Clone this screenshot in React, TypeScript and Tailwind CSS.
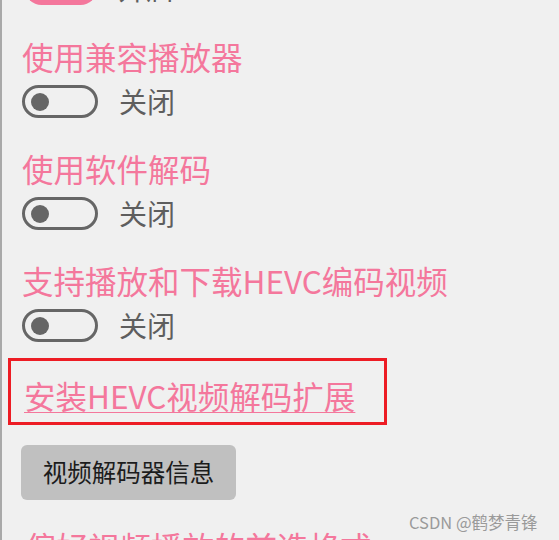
import React from "react";

const PINK = "text-[#f4779c]";

function Toggle({ on }: { on?: boolean }) {
  if (on) {
    return (
      <div className="w-[72px] h-[33px] rounded-full bg-[#f4779c] flex items-center justify-end pr-[9px] shrink-0">
        <div className="w-[18px] h-[18px] rounded-full bg-white" />
      </div>
    );
  }
  return (
    <div className="w-[76px] h-[33px] rounded-full border-[3px] border-[#666666] flex items-center pl-[6px] shrink-0 box-border">
      <div className="w-[18px] h-[18px] rounded-full bg-[#666666]" />
    </div>
  );
}

function ToggleRow({ on, label }: { on?: boolean; label: string }) {
  return (
    <div className="flex items-center gap-[21px] h-[33px]">
      <Toggle on={on} />
      <span className="text-[28px] leading-[33px] text-[#5e5e5e]">{label}</span>
    </div>
  );
}

function Setting({ title }: { title: string }) {
  return (
    <div className="flex flex-col mt-[29px]">
      <div className={`text-[31.5px] leading-[42px] ${PINK} whitespace-nowrap`}>{title}</div>
      <div className="mt-[8px]">
        <ToggleRow label="关闭" />
      </div>
    </div>
  );
}

export default function App() {
  return (
    <div
      className="relative w-[559px] h-[540px] overflow-hidden bg-[#f0f0f0] border-l-2 border-[#a9a9a9]"
      style={{ fontFamily: "'Noto Sans CJK SC', 'Noto Sans', sans-serif" }}
    >
      <div className="flex flex-col pl-[20px] -mt-[28px]">
        <div className="ml-[3px]">
          <ToggleRow on label="开启" />
        </div>
        <div className="h-px" />
        <Setting title="使用兼容播放器" />
        <Setting title="使用软件解码" />
        <Setting title="支持播放和下载HEVC编码视频" />
        <div className="-ml-[14px] mt-[16px] w-[379px] h-[67px] border-[3px] border-[#ed1c24] pl-[13px] pt-[13px] box-border">
          <span
            className={`text-[31.5px] leading-[42px] ${PINK} underline decoration-1 underline-offset-[3px] whitespace-nowrap`}
          >
            安装HEVC视频解码扩展
          </span>
        </div>
        <div className="-ml-px mt-[20px] w-[215px] h-[55px] rounded-[6px] bg-[#c0c0c0] flex items-center justify-center">
          <span className="text-[24.5px] text-[#1c1c1c] whitespace-nowrap">视频解码器信息</span>
        </div>
        <div className={`mt-[25px] ml-[3px] text-[31.5px] leading-[42px] ${PINK} whitespace-nowrap`}>
          偏好视频播放的首选格式
        </div>
      </div>
      <div className="absolute left-[407px] top-[511px] text-[16.5px] leading-[22px] text-[#9a9a9a] whitespace-nowrap">
        CSDN @鹤梦青锋
      </div>
    </div>
  );
}
